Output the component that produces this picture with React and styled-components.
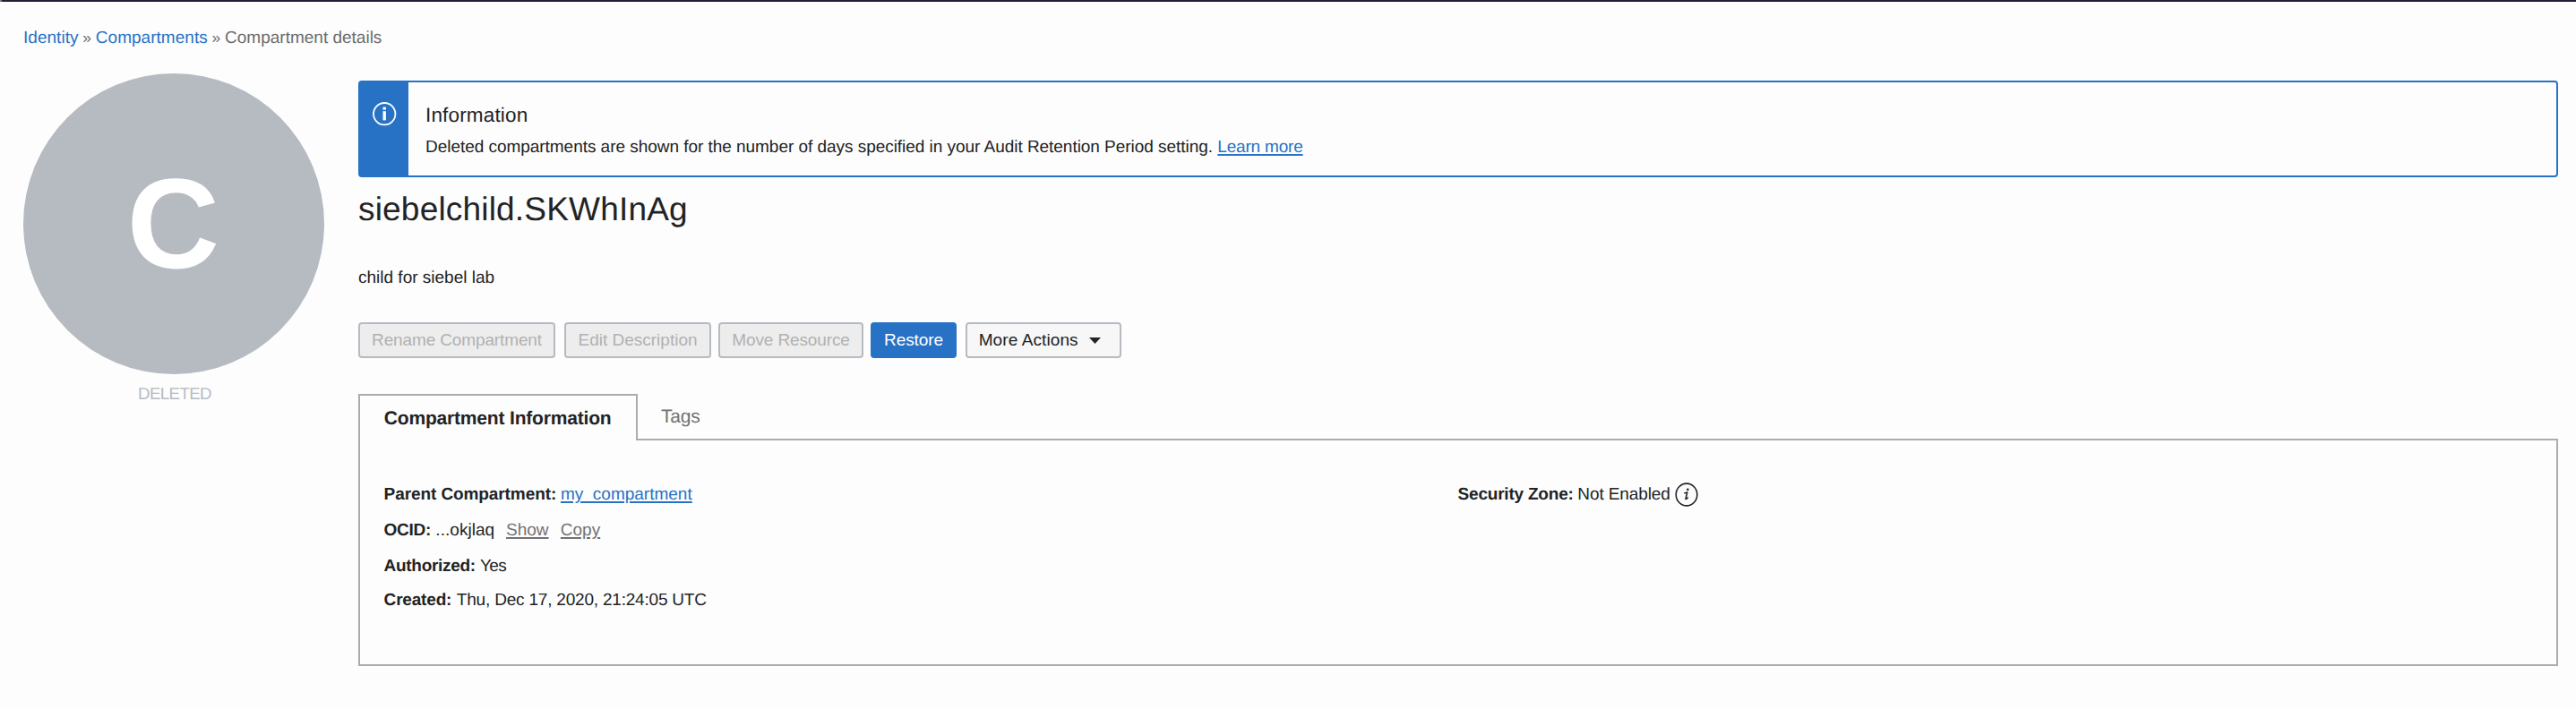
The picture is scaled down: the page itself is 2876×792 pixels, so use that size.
import React from "react";
import styled, { createGlobalStyle } from "styled-components";

const GlobalStyle = createGlobalStyle`
  * { box-sizing: border-box; }
  body {
    margin: 0;
    background: #fdfdfd;
    color: #222324;
    font-family: "Liberation Sans", Arial, sans-serif;
    font-size: 19px;
    line-height: 27px;
    text-rendering: geometricPrecision;
  }
`;

const Page = styled.div`
  min-height: 792px;
`;

const TopBar = styled.div`
  height: 2px;
  background: #1f2033;
  border-left: 2px solid #77777f;
`;

const Breadcrumbs = styled.nav`
  display: flex;
  padding: 27px 26px 0;
  color: #6c6c6c;
`;

const Crumb = styled.a`
  color: #2872c6;
  letter-spacing: 0.03px;
`;

const Separator = styled.span`
  width: 19.3px;
  text-align: center;
  font-size: 17.5px;
`;

const Body = styled.div`
  display: flex;
  gap: 38px;
  padding: 26px 20px 0 26px;
`;

const Sidebar = styled.aside`
  width: 336px;
  flex: none;
  text-align: center;
`;

const Avatar = styled.div`
  width: 336px;
  height: 336px;
  border-radius: 50%;
  background: #b6bbc2;
  color: #fff;
  font-size: 143px;
  font-weight: bold;
  line-height: 338px;
  letter-spacing: 1px;
`;

const Status = styled.div`
  margin-top: 9px;
  padding-left: 2px;
  color: #b6bbc2;
  font-size: 18.7px;
  line-height: 25px;
  letter-spacing: -0.6px;
`;

const Main = styled.main`
  flex: 1;
  padding-top: 8px;
`;

const Banner = styled.section`
  display: flex;
  height: 108px;
  border: 2px solid #2872c6;
  border-radius: 4px;
`;

const BannerIcon = styled.div`
  width: 54px;
  padding-top: 22px;
  background: #2872c6;
  text-align: center;
  line-height: 0;
`;

const BannerContent = styled.div`
  padding: 24px 19px 0;
`;

const BannerTitle = styled.div`
  font-size: 22.5px;
  line-height: 25px;
  letter-spacing: 0.16px;
`;

const BannerText = styled.div`
  margin-top: 10px;
  letter-spacing: -0.038px;
`;

const Link = styled.a`
  color: ${(p) => (p.$muted ? "#727272" : "#2872c6")};
  letter-spacing: ${(p) => p.$tracking || 0}px;
  text-decoration: underline;
  text-decoration-thickness: 2px;
  text-underline-offset: 2px;
  margin-left: ${(p) => p.$gap || 0}px;
`;

const Title = styled.h1`
  margin: 15px 0 0;
  font-size: 37px;
  line-height: 41px;
  font-weight: normal;
  letter-spacing: 0.19px;
`;

const Description = styled.p`
  margin: 43px 0 0;
`;

const Actions = styled.div`
  display: flex;
  margin-top: 36px;
`;

const variants = {
  disabled: "background: #ededed; border-color: #b6bbc2; color: #b1b1b1;",
  primary: "background: #2872c6; border-color: #2872c6; color: #fff;",
  plain: "background: #f7f7f7; border-color: #b6bbc2; color: #222324;",
};

const Button = styled.button`
  display: flex;
  align-items: center;
  justify-content: center;
  width: ${(p) => p.$width}px;
  height: 40px;
  margin: 0 ${(p) => p.$after || 0}px 0 0;
  padding: 0 0 1px;
  border: 2px solid;
  border-radius: 4px;
  font: inherit;
  line-height: 25px;
  letter-spacing: ${(p) => p.$tracking || 0}px;
  white-space: nowrap;
  ${(p) => variants[p.$variant]}
`;

const MenuButton = styled(Button)`
  justify-content: flex-start;
  padding-left: 12.7px;
`;

const CaretIcon = styled.svg`
  width: 13px;
  height: 7px;
  margin: 2px 0 0 12.6px;
`;

const Tabs = styled.div`
  display: flex;
  height: 52px;
  margin-top: 40px;
  line-height: 27px;
  font-size: 21px;
`;

const ActiveTab = styled.div`
  width: 312px;
  padding: 12px 0 0 26.8px;
  border: 2px solid #acacac;
  border-bottom: 0;
  font-weight: bold;
  letter-spacing: -0.18px;
  white-space: nowrap;
`;

const OtherTabs = styled.div`
  flex: 1;
  padding: 12px 0 0 26px;
  border-bottom: 2px solid #acacac;
  color: #727272;
  letter-spacing: -0.2px;
`;

const Panel = styled.section`
  display: grid;
  grid-template-columns: 1199px 1fr;
  height: 252px;
  padding: 47px 0 0 26.6px;
  border: 2px solid #acacac;
  border-top: 0;
`;

const Fields = styled.div`
  display: grid;
  grid-template-rows: 40px 40px 38px 27px;
`;

const Field = styled.div`
  display: flex;
  white-space: nowrap;
`;

const Label = styled.b`
  letter-spacing: ${(p) => p.$tracking}px;
`;

const Value = styled.span`
  margin-left: ${(p) => p.$gap}px;
  letter-spacing: ${(p) => p.$tracking || 0}px;
`;

const HelpIcon = styled.svg`
  width: 26px;
  height: 27px;
  margin: -0.5px 0 0 5.6px;
`;

function InfoIcon() {
  return (
    <svg width="27" height="27" viewBox="0 0 27 27" fill="none">
      <circle cx="13.2" cy="13.2" r="12.2" stroke="#fff" strokeWidth="1.8" />
      <rect x="11.5" y="5.6" width="3.4" height="3" fill="#fff" />
      <rect x="11.5" y="10.2" width="3.4" height="10.2" fill="#fff" />
    </svg>
  );
}

export default function App() {
  return (
    <Page>
      <GlobalStyle />
      <TopBar />
      <Breadcrumbs>
        <Crumb>Identity</Crumb>
        <Separator>»</Separator>
        <Crumb>Compartments</Crumb>
        <Separator>»</Separator>
        <span>Compartment details</span>
      </Breadcrumbs>
      <Body>
        <Sidebar>
          <Avatar>C</Avatar>
          <Status>DELETED</Status>
        </Sidebar>
        <Main>
          <Banner>
            <BannerIcon>
              <InfoIcon />
            </BannerIcon>
            <BannerContent>
              <BannerTitle>Information</BannerTitle>
              <BannerText>
                Deleted compartments are shown for the number of days specified in your Audit Retention Period setting.{" "}
                <Link $tracking={-0.18}>Learn more</Link>
              </BannerText>
            </BannerContent>
          </Banner>
          <Title>siebelchild.SKWhInAg</Title>
          <Description>child for siebel lab</Description>
          <Actions>
            <Button $variant="disabled" $width={220} $after={10} $tracking={-0.13}>Rename Compartment</Button>
            <Button $variant="disabled" $width={164} $after={8}>Edit Description</Button>
            <Button $variant="disabled" $width={162} $after={8} $tracking={-0.12}>Move Resource</Button>
            <Button $variant="primary" $width={96} $after={10} $tracking={-0.1}>Restore</Button>
            <MenuButton $variant="plain" $width={174} $tracking={0.1}>
              More Actions
              <CaretIcon viewBox="0 0 13 7">
                <path d="M0 0H13L6.5 7Z" fill="#222324" />
              </CaretIcon>
            </MenuButton>
          </Actions>
          <Tabs>
            <ActiveTab>Compartment Information</ActiveTab>
            <OtherTabs>Tags</OtherTabs>
          </Tabs>
          <Panel>
            <Fields>
              <Field>
                <Label $tracking={-0.09}>Parent Compartment:</Label>
                <Link $gap={4.8}>my_compartment</Link>
              </Field>
              <Field>
                <Label $tracking={-0.25}>OCID:</Label>
                <Value $gap={5.2} $tracking={0.04}>...okjlaq</Value>
                <Link $muted $gap={12.8}>Show</Link>
                <Link $muted $gap={13.3}>Copy</Link>
              </Field>
              <Field>
                <Label $tracking={-0.3}>Authorized:</Label>
                <Value $gap={5.2} $tracking={-0.6}>Yes</Value>
              </Field>
              <Field>
                <Label $tracking={-0.18}>Created:</Label>
                <Value $gap={5.6} $tracking={-0.2}>Thu, Dec 17, 2020, 21:24:05 UTC</Value>
              </Field>
            </Fields>
            <Fields>
              <Field>
                <Label $tracking={-0.21}>Security Zone:</Label>
                <Value $gap={4.7} $tracking={-0.1}>Not Enabled</Value>
                <HelpIcon viewBox="0 0 26 27" fill="none">
                  <ellipse cx="13" cy="13.5" rx="11.8" ry="12.4" stroke="#222324" strokeWidth="1.6" />
                  <circle cx="14.3" cy="7.8" r="1.35" fill="#222324" />
                  <path
                    d="M10.8 11.7C11.9 11.6 12.9 11.3 13.8 10.9L12 18.1C11.9 18.9 12.7 18.7 14.3 17"
                    stroke="#222324"
                    strokeWidth="1.6"
                    strokeLinejoin="round"
                    strokeLinecap="round"
                  />
                </HelpIcon>
              </Field>
            </Fields>
          </Panel>
        </Main>
      </Body>
    </Page>
  );
}
